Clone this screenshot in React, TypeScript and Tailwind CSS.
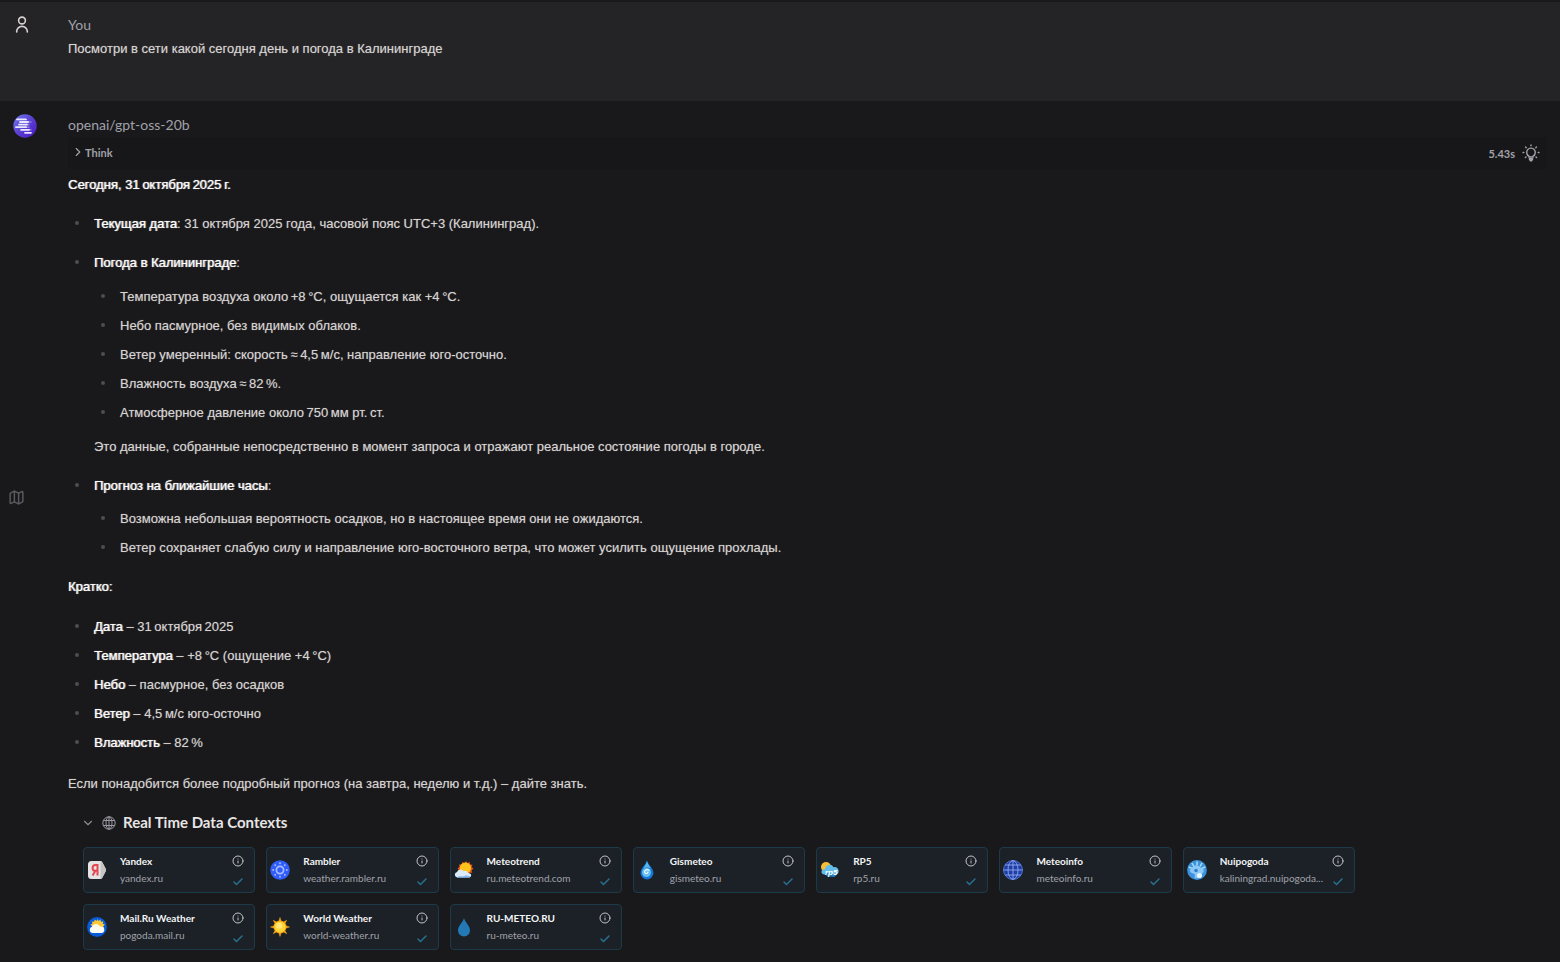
import * as React from "react";
import { Check, ChevronDown, ChevronRight, Info, Map } from "lucide-react";

interface Source {
    name: string;
    domain: string;
    label: string;
    icon: React.ReactNode;
}

const sources: Source[] = [
    { name: "Yandex", domain: "yandex.ru", label: "yandex.ru", icon: <YandexIcon /> },
    { name: "Rambler", domain: "weather.rambler.ru", label: "weather.rambler.ru", icon: <RamblerIcon /> },
    { name: "Meteotrend", domain: "ru.meteotrend.com", label: "ru.meteotrend.com", icon: <MeteotrendIcon /> },
    { name: "Gismeteo", domain: "gismeteo.ru", label: "gismeteo.ru", icon: <GismeteoIcon /> },
    { name: "RP5", domain: "rp5.ru", label: "rp5.ru", icon: <Rp5Icon /> },
    { name: "Meteoinfo", domain: "meteoinfo.ru", label: "meteoinfo.ru", icon: <MeteoinfoIcon /> },
    { name: "Nuipogoda", domain: "kaliningrad.nuipogoda.ru", label: "kaliningrad.nuipogoda...", icon: <NuipogodaIcon /> },
    { name: "Mail.Ru Weather", domain: "pogoda.mail.ru", label: "pogoda.mail.ru", icon: <MailWeatherIcon /> },
    { name: "World Weather", domain: "world-weather.ru", label: "world-weather.ru", icon: <WorldWeatherIcon /> },
    { name: "RU-METEO.RU", domain: "ru-meteo.ru", label: "ru-meteo.ru", icon: <RuMeteoIcon /> },
];

function YandexIcon() {
    return (
        <svg viewBox="0 0 20 20" className="size-5 shrink-0">
            <path d="M4.500 1h8.500c1 0 1.800.5 2.300 1.300l3.400 6.500a2.500 2.500 0 0 1 0 2.400l-3.400 6.500c-.5.800-1.300 1.300-2.300 1.300H4.500a3.500 3.500 0 0 1-3.500-3.500v-11A3.500 3.500 0 0 1 4.500 1z" fill="#e4e4e4" />
            <path d="M13.500 1.200c.8.100 1.400.500 1.800 1.100l3.400 6.500a2.500 2.500 0 0 1 0 2.400l-3.400 6.500c-.4.600-1 1-1.800 1.200z" fill="#c4c4c4" />
            <path d="M10.500 15.500V5H8.500C6.700 5 5.600 6.200 5.600 7.900c0 1.800 1.100 2.900 2.900 2.900h2M8.300 11l-2.700 4.500" fill="none" stroke="#e5484f" strokeWidth="2" />
        </svg>
    );
}

function RamblerIcon() {
    return (
        <svg viewBox="0 0 20 20" className="size-5 shrink-0">
            <circle cx="10" cy="10" r="9.800" fill="#315efb" />
            <circle cx="10" cy="10" r="3.600" fill="none" stroke="#a9bcff" strokeWidth="1.700" />
            {[0, 45, 90, 135, 180, 225, 270, 315].map((angle) => (
                <circle key={angle} cx="10" cy="3.200" r="0.950" fill="#a9bcff" transform={`rotate(${angle} 10 10)`} />
            ))}
        </svg>
    );
}

function MeteotrendIcon() {
    return (
        <svg viewBox="0 0 20 20" className="size-5 shrink-0">
            <path d="M12 1l1.300 2 2.400-1 .2 2.500 2.600.3-1 2.300 2 1.500-2 1.600.8 2.500H4.500l.6-2.400-1.600-2L5.500 7 5 4.600l2.600-.2.800-2.400 2.300 1z" fill="#e8561d" />
            <circle cx="11.500" cy="8" r="5.600" fill="#fdc21c" />
            <path d="M3.200 17.500a2.800 2.800 0 0 1-.2-5.500 3.800 3.800 0 0 1 6.700-.8 3 3 0 0 1 4.300 1.800c3.500-.4 4.500 4 1 4.500z" fill="#dceafd" />
            <path d="M3 17.200c3-2 5 0 7.500-1.200s4 .6 6 .2l-1 1.300H3.500z" fill="#80b7f4" />
        </svg>
    );
}

function GismeteoIcon() {
    return (
        <svg viewBox="0 0 20 20" className="size-5 shrink-0">
            <path d="M10 .5c1 4 6.500 7.500 6.500 12.500a6.500 6.500 0 0 1-13 0C3.500 8 9 4.500 10 .5z" fill="#1775d1" />
            <path d="M10 1c.5 3 2.500 5 4 7.500-2-1-5.500-1.500-8 0C7.700 6 9.500 4 10 1z" fill="#58b5ee" />
            <circle cx="9.500" cy="12.500" r="4.500" fill="#62c0f6" />
            <path d="M12.500 10.500c-3-2-6 .5-4.500 2.500 1.500 1.500 3.500-.3 2.700-1.500" fill="none" stroke="#eefaff" strokeWidth="1.200" />
        </svg>
    );
}

function Rp5Icon() {
    return (
        <svg viewBox="0 0 20 20" className="size-5 shrink-0">
            <circle cx="6" cy="7" r="5" fill="#f8bd37" />
            <path d="M4 14.500c-4-.5-3-6 .8-5.300C6 4 12 3.500 13.300 7.200c5-1.300 7.600 5.500 3 7.300z" fill="#63bce9" />
            <path d="M5 13l12 1c-1 3-3.500 3.500-6 2.500-3.500 1-5-1-6-3.500z" fill="#2583c7" />
            <text x="5" y="15" fontFamily="Liberation Sans" fontSize="8" fontWeight="700" fontStyle="italic" fill="#ffffff">rp5</text>
        </svg>
    );
}

function MeteoinfoIcon() {
    return (
        <svg viewBox="0 0 20 20" className="size-5 shrink-0" fill="none" stroke="#8fa9f0" strokeWidth="0.900">
            <circle cx="10" cy="10" r="9.500" fill="#203ea5" stroke="#5577db" />
            <ellipse cx="10" cy="10" rx="5" ry="9.300" />
            <path d="M10 .5v19M.5 10h19M2.200 5h15.600M2.200 15h15.600" />
        </svg>
    );
}

function NuipogodaIcon() {
    return (
        <svg viewBox="0 0 20 20" className="size-5 shrink-0">
            <circle cx="10" cy="10" r="9.900" fill="#3d91df" />
            <path d="M10 1.500v4M5 3l2 3.500M15 3l-2 3.500M1.800 7l3.800 1.600M18.200 7l-3.800 1.600" stroke="#a8e1eb" strokeWidth="1.500" />
            <path d="M4.500 13a3 3 0 0 1 .7-5.500C7 4.800 12 5 13.200 7.500c4 .2 4.800 5 1.500 6.200l-1.200 4.500H7.700V14z" fill="#8bc8f5" />
            <circle cx="9" cy="10.500" r="1.800" fill="#327dd1" />
            <circle cx="12.500" cy="15.500" r="2.500" fill="#e8f7ff" />
        </svg>
    );
}

function MailWeatherIcon() {
    return (
        <svg viewBox="0 0 20 20" className="size-5 shrink-0">
            <circle cx="10" cy="10" r="9.900" fill="#075bd8" />
            <path d="M10.500 2l1 2 2-1.500.4 2.300 2.500-.3-.7 2.300 2.300.8-1.800 1.700 1 2.200H5l.3-2.200-2-1.500 2.200-1-.7-2.300 2.400.2.400-2.200 2 1.500z" fill="#ffc936" />
            <path d="M5.200 16a3.200 3.200 0 0 1-.1-6.200c1-3.700 6.800-3.700 7.900-.2 5.500-.6 5.500 6.400 1.500 6.400z" fill="#fffdf2" />
        </svg>
    );
}

function WorldWeatherIcon() {
    return (
        <svg viewBox="0 0 20 20" className="size-5 shrink-0">
            <path d="M10 .5l1.200 4h-2.400zM10 19.500l1.200-4h-2.400zM.5 10l4-1.200v2.400zM19.500 10l-4-1.200v2.400zM3.300 3.300l3.700 2-1.700 1.700zM16.700 3.300l-2 3.700-1.700-1.700zM3.300 16.700l2-3.700 1.700 1.700zM16.700 16.700l-3.700-2 1.700-1.700z" fill="#f8a51b" stroke="#f8a51b" strokeWidth="0.500" />
            <circle cx="10" cy="10" r="6.500" fill="#f5a20b" />
            <circle cx="10" cy="10" r="5.600" fill="#ffd238" />
            <circle cx="9.200" cy="8.700" r="3" fill="#ffe879" />
        </svg>
    );
}

function RuMeteoIcon() {
    return (
        <svg viewBox="0 0 20 20" className="size-5 shrink-0">
            <path d="M10 1c.8 4 6 7.500 6 12.500a6 6 0 0 1-12 0C4 8.500 9.200 5 10 1z" fill="#2379b5" />
        </svg>
    );
}

function UserIcon() {
    return (
        <svg viewBox="0 0 14 18" className="h-[18px] w-[14px]" fill="none" stroke="#d6d3d1" strokeWidth="1.600" strokeLinecap="round">
            <circle cx="7" cy="4.500" r="3.400" />
            <path d="M1.700 16v-.6a5.300 5 0 0 1 10.600 0v.6" />
        </svg>
    );
}

function ModelLogo() {
    return (
        <svg viewBox="0 0 24 24" className="size-6">
            <defs>
                <linearGradient id="logo" x1="0" y1="0" x2="1" y2="1">
                    <stop offset="0" stopColor="#6b7cf0" />
                    <stop offset="0.500" stopColor="#5a3fd0" />
                    <stop offset="1" stopColor="#4b18c4" />
                </linearGradient>
            </defs>
            <circle cx="12" cy="12" r="11.700" fill="url(#logo)" />
            <path d="M12 8h6M12 10.600h4M12 13.200h4M10 15.800h8" stroke="#8f7ce8" strokeWidth="1.600" strokeLinecap="round" />
            <path d="M4 5.400h9M7 8h8M6 10.600h8M3 13.200h10M8 15.800h8M12 18.800h6" stroke="#e9e6ff" strokeWidth="1.800" strokeLinecap="round" />
        </svg>
    );
}

function BulbIcon() {
    return (
        <svg viewBox="0 0 18 18" className="size-[18px] text-[#a1a1aa]" fill="none" stroke="currentColor" strokeWidth="1.400" strokeLinecap="round">
            <path d="M7 13v-.8a4.300 4.300 0 1 1 4 0v.8z" />
            <path d="M7.500 14.500v1l1 1.200h1l1-1.200v-1z" fill="currentColor" />
            <path d="M9 1v.8M3.600 3.100l.6.600M14.400 3.100l-.6.600M1 8.500h.8M17 8.500h-.8M3.400 13.500l.6-.5M14.600 13.500l-.6-.5" />
        </svg>
    );
}

function GlobeIcon() {
    return (
        <svg viewBox="0 0 14 14" className="size-[14px]" fill="none" stroke="#9a9aa3" strokeWidth="1">
            <circle cx="7" cy="7" r="6.200" />
            <ellipse cx="7" cy="7" rx="3" ry="6.200" />
            <path d="M7 .8v12.400M1.300 4.500h11.400M1.300 9.500h11.400" />
        </svg>
    );
}

function Bullet({ children }: { children: React.ReactNode }) {
    return (
        <li className="flex">
            <span className="mt-[9px] mr-[15px] ml-[7px] size-1 shrink-0 rounded-full bg-[#504d4b]" />
            <div className="min-w-0 flex-1">{children}</div>
        </li>
    );
}

function Strong({ children }: { children: React.ReactNode }) {
    return <strong className="font-normal text-white [text-shadow:1px_0_0_#ffffff80,0_0_1px_#ffffff80]">{children}</strong>;
}

function SourceCard({ source }: { source: Source }) {
    return (
        <li className="flex h-[46px] items-center rounded border border-[#1d3a4a] bg-[#1b2127] pr-[10px] pl-[3px]">
            {source.icon}
            <div className="ml-[13px] flex min-w-0 flex-1 flex-col text-[10px] leading-[17px] whitespace-nowrap">
                <span className="font-bold text-[#f4f4f5]">{source.name}</span>
                <a href={`https://${source.domain}`} className="text-[#a1a1aa]">
                    {source.label}
                </a>
            </div>
            <div className="mt-[2px] flex w-3 flex-col items-center gap-[9px]">
                <button type="button" aria-label={`About ${source.name}`} className="text-[#c4c4c8]">
                    <Info className="size-3" />
                </button>
                <Check className="size-3 text-[#28708f]" strokeWidth={3} />
            </div>
        </li>
    );
}

export default function App() {
    return (
        <div className="min-h-screen bg-[#19191b] font-['Liberation_Sans',sans-serif] text-[13px] leading-[23px] text-[#d6d3d1]">
            {/* User message */}
            <section className="flex h-[101px] border-t-2 border-[#19191b] bg-[#242426] pt-[11px]">
                <div className="flex w-[68px] shrink-0 pt-[3px] pl-[15px]">
                    <UserIcon />
                </div>
                <div>
                    <h2 className="font-['Lato',sans-serif] text-[14px] leading-[23px] text-[#a1a1aa]">You</h2>
                    <p className="mt-px [text-shadow:0_0_1px_#d6d3d180]">Посмотри в сети какой сегодня день и погода в Калининграде</p>
                </div>
            </section>

            {/* Model answer */}
            <section className="flex pt-3 pr-[13px] pb-3">
                <div className="w-[68px] shrink-0 pt-px pl-[13px]">
                    <ModelLogo />
                </div>
                <div className="min-w-0 flex-1">
                    <h2 className="font-['Lato',sans-serif] text-[14px] leading-[23px] text-[#a1a1aa]">openai/gpt-oss-20b</h2>
                    <div className="mt-px flex h-8 items-center justify-between rounded bg-[#171719] pr-[7px] pl-[3px] font-['Lato',sans-serif] text-[11px] font-bold text-[#a1a1aa]">
                        <button type="button" className="flex items-center pb-[2px]">
                            <ChevronRight className="size-[14px]" />
                            Think
                        </button>
                        <span className="flex items-center gap-[7px]">
                            5.43s
                            <BulbIcon />
                        </span>
                    </div>

                    <div className="mt-1 flex flex-col gap-4 [text-shadow:0_0_1px_#d6d3d180]">
                        <p>
                            <Strong>Сегодня, 31{"\u202F"}октября{"\u202F"}2025{"\u202F"}г.</Strong>
                        </p>
                        <ul className="flex flex-col gap-4">
                            <Bullet>
                                <Strong>Текущая дата</Strong>: 31 октября 2025 года, часовой пояс UTC+3 (Калининград).
                            </Bullet>
                            <Bullet>
                                <Strong>Погода в Калининграде</Strong>:
                                <ul className="my-[11px] flex flex-col gap-[6px]">
                                    <Bullet>Температура воздуха около{"\u202F"}+8{"\u202F"}°C, ощущается как +4{"\u202F"}°C.</Bullet>
                                    <Bullet>Небо пасмурное, без видимых облаков.</Bullet>
                                    <Bullet>Ветер умеренный: скорость{"\u202F"}≈{"\u202F"}4,5{"\u202F"}м/с, направление юго-осточно.</Bullet>
                                    <Bullet>Влажность воздуха{"\u202F"}≈{"\u202F"}82{"\u202F"}%.</Bullet>
                                    <Bullet>Атмосферное давление около{"\u202F"}750{"\u202F"}мм рт.{"\u202F"}ст.</Bullet>
                                </ul>
                                <p>Это данные, собранные непосредственно в момент запроса и отражают реальное состояние погоды в городе.</p>
                            </Bullet>
                            <Bullet>
                                <Strong>Прогноз на ближайшие часы</Strong>:
                                <ul className="mt-[10px] flex flex-col gap-[6px]">
                                    <Bullet>Возможна небольшая вероятность осадков, но в настоящее время они не ожидаются.</Bullet>
                                    <Bullet>Ветер сохраняет слабую силу и направление юго-восточного ветра, что может усилить ощущение прохлады.</Bullet>
                                </ul>
                            </Bullet>
                        </ul>
                        <p>
                            <Strong>Кратко:</Strong>
                        </p>
                        <ul className="flex flex-col gap-[6px] pt-px pb-[2px]">
                            <Bullet><Strong>Дата</Strong> – 31{"\u202F"}октября{"\u202F"}2025</Bullet>
                            <Bullet><Strong>Температура</Strong> – +8{"\u202F"}°C (ощущение +4{"\u202F"}°C)</Bullet>
                            <Bullet><Strong>Небо</Strong> – пасмурное, без осадков</Bullet>
                            <Bullet><Strong>Ветер</Strong> – 4,5{"\u202F"}м/с юго-осточно</Bullet>
                            <Bullet><Strong>Влажность</Strong> – 82{"\u202F"}%</Bullet>
                        </ul>
                        <p>Если понадобится более подробный прогноз (на завтра, неделю и т.д.) – дайте знать.</p>
                    </div>

                    {/* Sources */}
                    <div className="mt-4 px-[15px] font-['Lato',sans-serif]">
                        <button type="button" className="-ml-[2px] flex items-center gap-[7px] text-[15px] font-bold text-[#e7e5e4]">
                            <ChevronDown className="size-[14px] text-[#8a8a93]" />
                            <GlobeIcon />
                            Real Time Data Contexts
                        </button>
                        <ul className="mt-[13px] grid max-w-[1272px] grid-cols-7 gap-[11px]">
                            {sources.map((source) => (
                                <SourceCard key={source.name} source={source} />
                            ))}
                        </ul>
                    </div>
                </div>
            </section>

            <button type="button" aria-label="Map" className="fixed top-1/2 left-2 mt-2 text-[#5b5b62]">
                <Map className="size-[17px]" />
            </button>
        </div>
    );
}
